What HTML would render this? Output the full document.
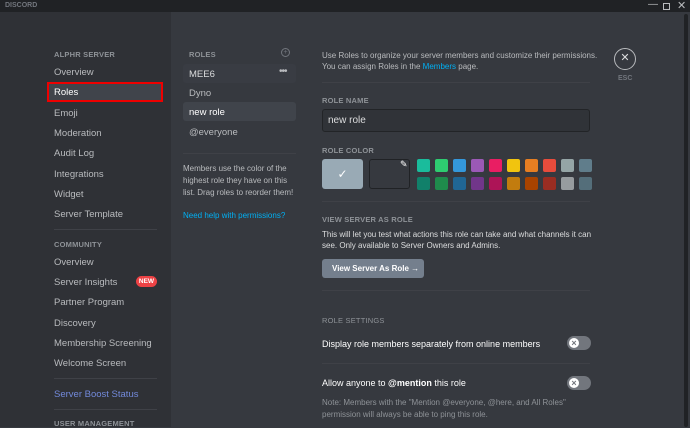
<!DOCTYPE html>
<html><head><style>
*{margin:0;padding:0;box-sizing:border-box}
body{width:690px;height:427px;overflow:hidden;background:#36393f;font-family:"Liberation Sans",sans-serif;position:relative}
.a{position:absolute;white-space:nowrap}
.h{font-size:7.5px;font-weight:bold;color:#8e9297;letter-spacing:.2px}
.n{font-size:9.5px;color:#b9bbbe;left:54px}
.d{position:absolute;height:1px;background:#3f4147}
.t{font-size:8.5px;color:#dcddde}
.sw{position:absolute;width:13px;height:13px;border-radius:2px}
.tg{position:absolute;width:24px;height:14px;border-radius:7px;background:#72767d}
.tg:after{content:"×";position:absolute;left:2px;top:2px;width:10px;height:10px;border-radius:50%;background:#fff;color:#72767d;font-size:9px;line-height:10px;text-align:center;font-weight:bold}
</style></head><body>
<div class="a" style="left:0;top:0;width:690px;height:12px;background:#202225"></div>
<div class="a" style="left:5px;top:2px;font-size:7px;font-weight:bold;color:#72767d">DISCORD</div>
<div class="a" style="left:648px;top:-1px;font-size:10px;color:#b9bbbe">—</div>
<div class="a" style="left:663px;top:3px;width:7px;height:7px;border:1px solid #b9bbbe"></div>
<div class="a" style="left:677px;top:-1px;font-size:11px;color:#b9bbbe">✕</div>
<div class="a" style="left:0;top:12px;width:171px;height:415px;background:#2f3136"></div>
<div class="a" style="left:684px;top:14px;width:4px;height:413px;background:#202225;border-radius:2px"></div>

<div class="a h" style="left:54px;top:50px">ALPHR SERVER</div>
<div class="a n" style="top:67px">Overview</div>
<div class="a" style="left:47px;top:82px;width:116px;height:20px;border:2px solid #e00;background:#40444b"></div>
<div class="a n" style="top:87px;color:#fff">Roles</div>
<div class="a n" style="top:108px">Emoji</div>
<div class="a n" style="top:128px">Moderation</div>
<div class="a n" style="top:148px">Audit Log</div>
<div class="a n" style="top:169px">Integrations</div>
<div class="a n" style="top:189px">Widget</div>
<div class="a n" style="top:209px">Server Template</div>
<div class="d" style="left:54px;top:229px;width:103px"></div>
<div class="a h" style="left:54px;top:240px">COMMUNITY</div>
<div class="a n" style="top:257px">Overview</div>
<div class="a n" style="top:277px">Server Insights</div>
<div class="a" style="left:136px;top:276px;width:21px;height:11px;border-radius:6px;background:#ed4245;color:#fff;font-size:6.5px;font-weight:bold;line-height:11px;text-align:center">NEW</div>
<div class="a n" style="top:297px">Partner Program</div>
<div class="a n" style="top:318px">Discovery</div>
<div class="a n" style="top:338px">Membership Screening</div>
<div class="a n" style="top:358px">Welcome Screen</div>
<div class="d" style="left:54px;top:378px;width:103px"></div>
<div class="a n" style="top:389px;color:#7289da">Server Boost Status</div>
<div class="d" style="left:54px;top:409px;width:103px"></div>
<div class="a h" style="left:54px;top:419px">USER MANAGEMENT</div>

<div class="a h" style="left:189px;top:50px">ROLES</div>
<div class="a" style="left:281px;top:48px;width:9px;height:9px;border:1px solid #72767d;border-radius:50%;font-size:7px;color:#72767d;line-height:7px;text-align:center">+</div>
<div class="a" style="left:183px;top:64px;width:113px;height:19px;background:#393c43;border-radius:3px"></div>
<div class="a" style="left:183px;top:102px;width:113px;height:19px;background:#40444b;border-radius:3px"></div>
<div class="a n" style="left:189px;top:69px;color:#dcddde">MEE6</div>
<div class="a" style="left:279px;top:66px;font-size:10px;color:#b9bbbe;letter-spacing:-1px">•••</div>
<div class="a n" style="left:189px;top:88px">Dyno</div>
<div class="a n" style="left:189px;top:107px;color:#fff">new role</div>
<div class="a n" style="left:189px;top:127px">@everyone</div>
<div class="d" style="left:183px;top:153px;width:113px"></div>
<div class="a" style="left:183px;top:163px;font-size:8px;color:#b9bbbe;line-height:12px;white-space:normal;width:115px">Members use the color of the highest role they have on this list. Drag roles to reorder them!</div>
<div class="a" style="left:183px;top:211px;font-size:8px;color:#00b0f4">Need help with permissions?</div>

<div class="a t" style="left:322px;top:50px;line-height:11px;color:#b9bbbe;font-size:8px">Use Roles to organize your server members and customize their permissions.<br>You can assign Roles in the <span style="color:#00b0f4">Members</span> page.</div>
<div class="a" style="left:614px;top:48px;width:22px;height:22px;border:1.5px solid #b9bbbe;border-radius:50%;color:#dcddde;font-size:11px;line-height:19px;text-align:center">✕</div>
<div class="a" style="left:618px;top:75px;font-size:7px;color:#72767d;font-weight:bold">ESC</div>
<div class="d" style="left:322px;top:82px;width:268px"></div>
<div class="a h" style="left:322px;top:96px">ROLE NAME</div>
<div class="a" style="left:322px;top:109px;width:268px;height:23px;background:#303338;border:1px solid #222427;border-radius:3px"></div>
<div class="a" style="left:328px;top:115px;font-size:10px;color:#dcddde">new role</div>
<div class="a h" style="left:322px;top:146px">ROLE COLOR</div>
<div class="a" style="left:322px;top:159px;width:41px;height:30px;background:#99aab5;border-radius:3px;color:#fff;font-size:12px;text-align:center;line-height:30px">✓</div>
<div class="a" style="left:369px;top:159px;width:41px;height:30px;border:1px solid #202225;border-radius:3px"></div>
<div class="a" style="left:400px;top:159px;font-size:9px;color:#fff">✎</div>
<div class="sw" style="left:417px;top:159px;background:#1abc9c"></div><div class="sw" style="left:435px;top:159px;background:#2ecc71"></div><div class="sw" style="left:453px;top:159px;background:#3498db"></div><div class="sw" style="left:471px;top:159px;background:#9b59b6"></div><div class="sw" style="left:489px;top:159px;background:#e91e63"></div><div class="sw" style="left:507px;top:159px;background:#f1c40f"></div><div class="sw" style="left:525px;top:159px;background:#e67e22"></div><div class="sw" style="left:543px;top:159px;background:#e74c3c"></div><div class="sw" style="left:561px;top:159px;background:#95a5a6"></div><div class="sw" style="left:579px;top:159px;background:#607d8b"></div>
<div class="sw" style="left:417px;top:177px;background:#11806a"></div><div class="sw" style="left:435px;top:177px;background:#1f8b4c"></div><div class="sw" style="left:453px;top:177px;background:#206694"></div><div class="sw" style="left:471px;top:177px;background:#71368a"></div><div class="sw" style="left:489px;top:177px;background:#ad1457"></div><div class="sw" style="left:507px;top:177px;background:#c27c0e"></div><div class="sw" style="left:525px;top:177px;background:#a84300"></div><div class="sw" style="left:543px;top:177px;background:#992d22"></div><div class="sw" style="left:561px;top:177px;background:#979c9f"></div><div class="sw" style="left:579px;top:177px;background:#546e7a"></div>
<div class="d" style="left:322px;top:201px;width:268px"></div>
<div class="a h" style="left:322px;top:215px">VIEW SERVER AS ROLE</div>
<div class="a t" style="left:322px;top:229px;line-height:11px;font-size:8px">This will let you test what actions this role can take and what channels it can<br>see. Only available to Server Owners and Admins.</div>
<div class="a" style="left:322px;top:259px;width:102px;height:19px;background:#747f8d;border-radius:3px;color:#fff;font-size:8px;font-weight:bold;line-height:19px;padding-left:10px">View Server As Role →</div>
<div class="d" style="left:322px;top:290px;width:268px"></div>
<div class="a h" style="left:322px;top:316px;font-weight:normal">ROLE SETTINGS</div>
<div class="a" style="left:322px;top:339px;font-size:9px;color:#fff">Display role members separately from online members</div>
<div class="tg" style="left:567px;top:336px"></div>
<div class="d" style="left:322px;top:363px;width:268px"></div>
<div class="a" style="left:322px;top:378px;font-size:9px;color:#fff">Allow anyone to <b>@mention</b> this role</div>
<div class="tg" style="left:567px;top:376px"></div>
<div class="a" style="left:322px;top:397px;font-size:8px;color:#8e9297;line-height:12px">Note: Members with the "Mention @everyone, @here, and All Roles"<br>permission will always be able to ping this role.</div>
</body></html>
